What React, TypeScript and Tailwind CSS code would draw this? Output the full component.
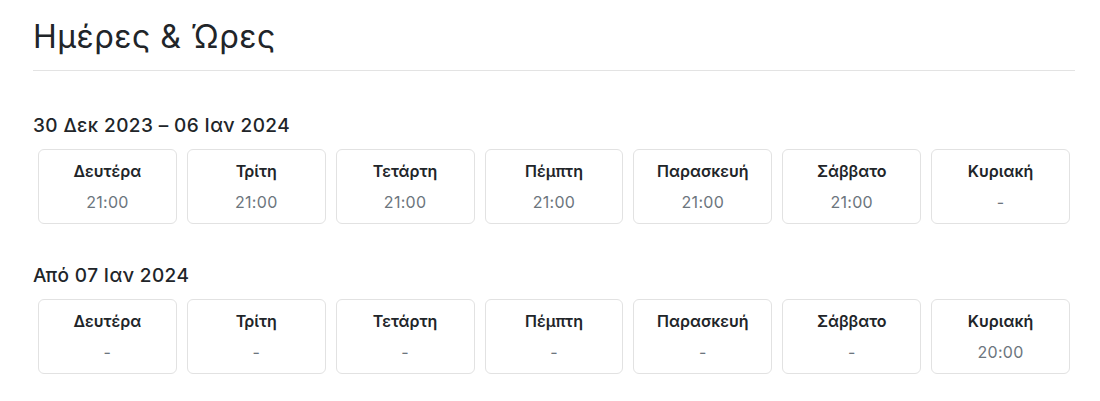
const days = ['Δευτέρα', 'Τρίτη', 'Τετάρτη', 'Πέμπτη', 'Παρασκευή', 'Σάββατο', 'Κυριακή'];

const schedules = [
  {
    label: '30 Δεκ 2023 – 06 Ιαν 2024',
    times: ['21:00', '21:00', '21:00', '21:00', '21:00', '21:00', '-'],
  },
  {
    label: 'Από 07 Ιαν 2024',
    times: ['-', '-', '-', '-', '-', '-', '20:00'],
  },
];

const App = () => {
  return (
    <div
      className="min-h-screen bg-white pl-[33px] pr-[25px] pt-[18px] text-[#212529]"
      style={{ fontFamily: 'Inter, "Noto Sans", sans-serif' }}
    >
      {/* Header */}
      <h1 className="border-b border-[#e3e3e3] pb-[14px] text-[32px] font-normal leading-[38px] tracking-[0.5px]">
        Ημέρες &amp; Ώρες
      </h1>

      {schedules.map((schedule, index) => (
        <div key={index} className={index === 0 ? 'mt-[41px]' : 'mt-[38px]'}>
          <h2 className="mb-[10px] text-[19px] font-medium leading-[27px] tracking-[0.4px]">{schedule.label}</h2>
          <div className="grid grid-cols-7 gap-[10px] px-[5px]">
            {days.map((day, i) => (
              <div
                key={day}
                className="flex h-[75px] flex-col items-center rounded-md border border-[#e2e2e2] pt-[10px]"
              >
                <div className="text-[16px] font-semibold leading-[22px]">{day}</div>
                <div className="mt-[9px] text-[16px] leading-[22px] tracking-[0.3px] text-[#6c757d]">
                  {schedule.times[i]}
                </div>
              </div>
            ))}
          </div>
        </div>
      ))}
    </div>
  );
};

export default App;
